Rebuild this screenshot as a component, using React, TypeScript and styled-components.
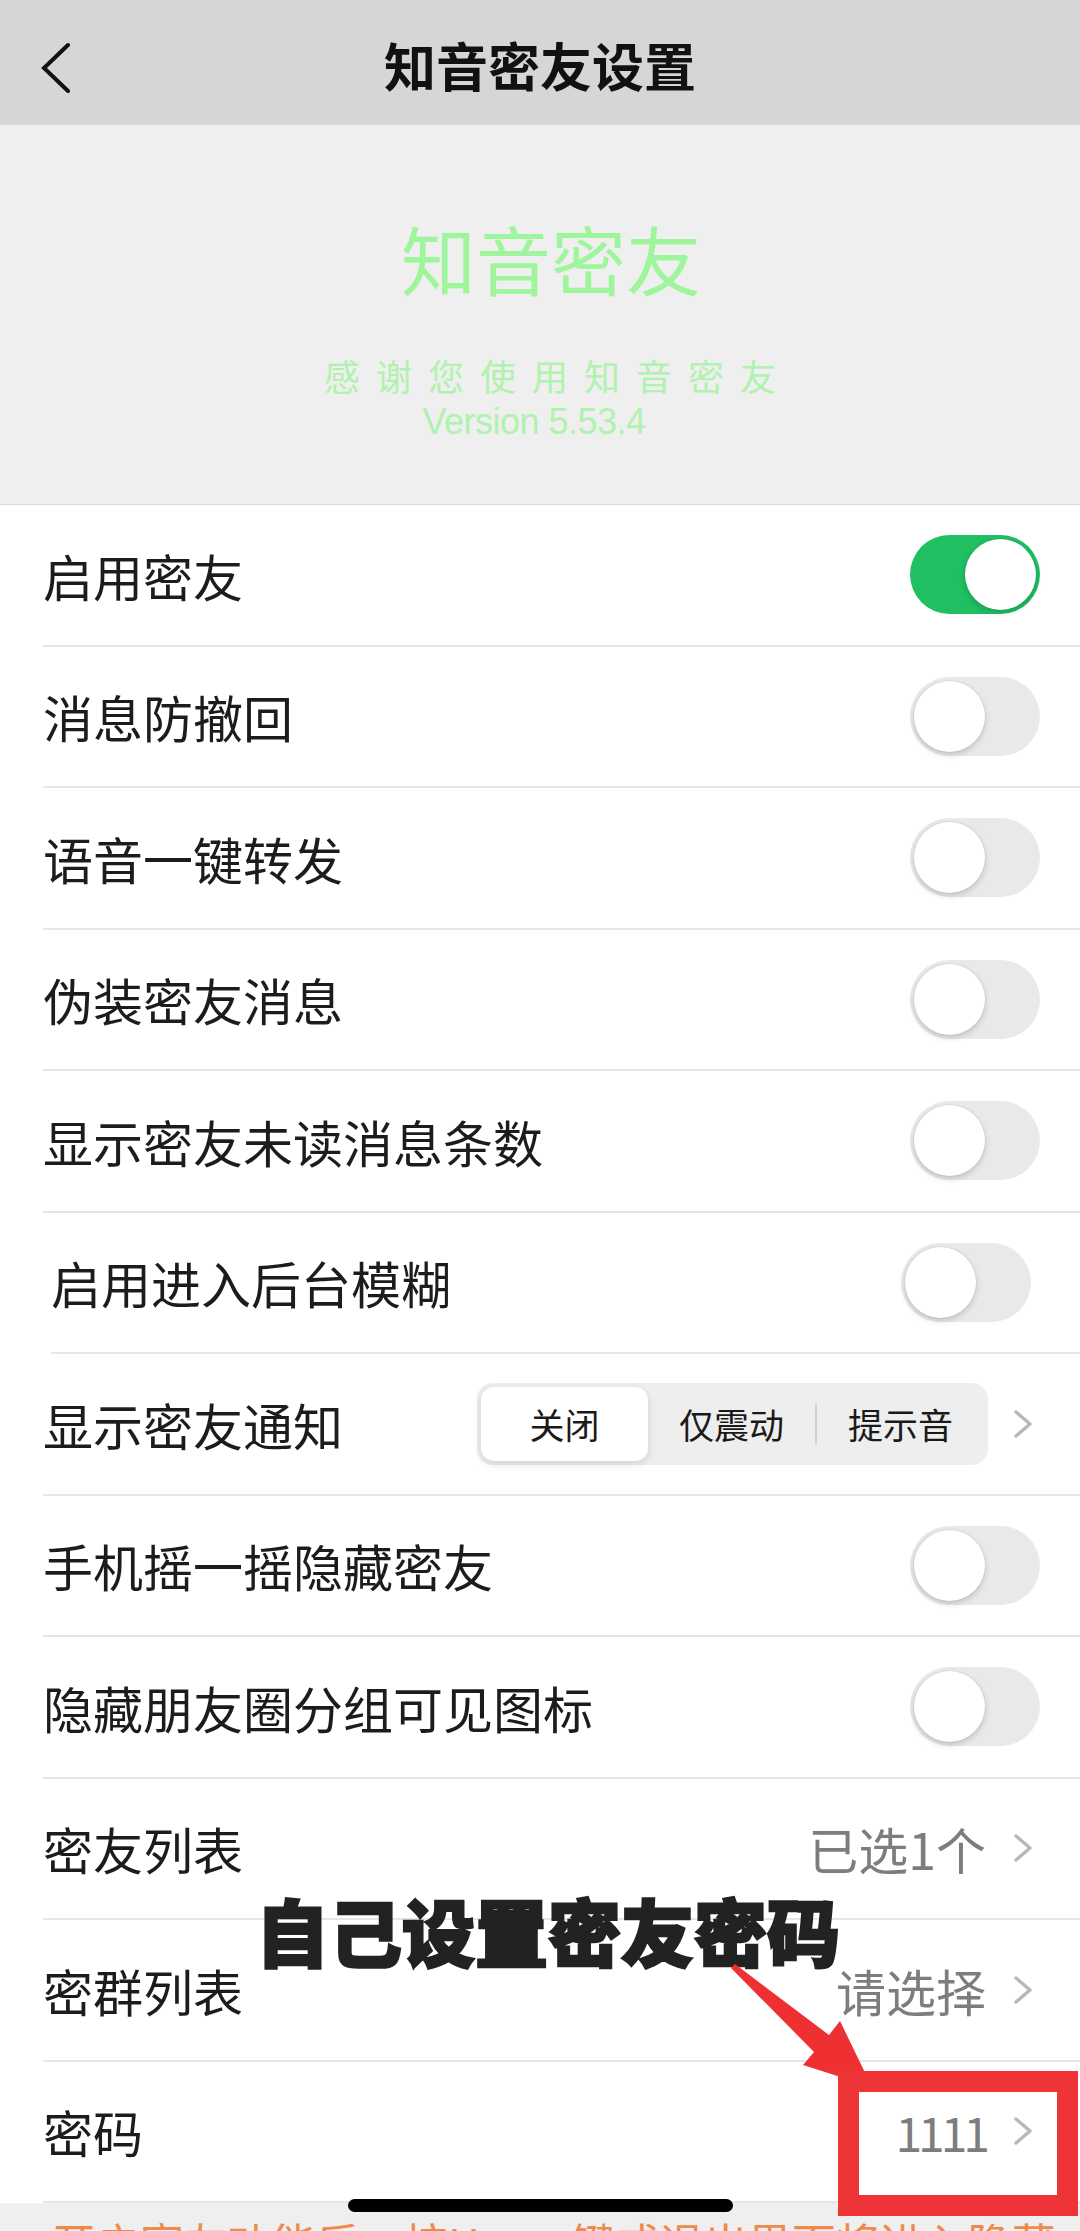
import styled, { createGlobalStyle } from 'styled-components';

const GlobalStyle = createGlobalStyle`
  html, body {
    margin: 0;
    padding: 0;
    background: #fff;
  }
  body {
    font-family: 'Noto Sans CJK SC', 'Noto Sans', sans-serif;
  }
`;

const Page = styled.div`
  position: relative;
  width: 1080px;
  height: 2231px;
  overflow: hidden;
  background: #fff;
`;

const NavBar = styled.header`
  height: 125px;
  background: #d6d6d6;
  display: grid;
  grid-template-columns: 1fr auto 1fr;
  align-items: center;
`;

const BackButton = styled.button`
  justify-self: start;
  margin-left: 40px;
  padding: 0;
  border: none;
  background: none;
  display: flex;
`;

const NavTitle = styled.h1`
  margin: 4px 0 0;
  font-size: 52px;
  line-height: 1;
  font-weight: 700;
  color: #111;
`;

const Banner = styled.section`
  box-sizing: border-box;
  height: 380px;
  padding-top: 95px;
  background: #efefef;
  border-bottom: 1px solid #d9d9d9;
  display: flex;
  flex-direction: column;
  align-items: center;
`;

const BrandName = styled.div`
  font-size: 75px;
  line-height: 75px;
  padding-left: 22px;
  color: #9ef59c;
`;

const Thanks = styled.div`
  margin-top: 62px;
  font-size: 36px;
  line-height: 36px;
  letter-spacing: 16px;
  padding-left: 36px;
  color: #b0f2ae;
`;

const Version = styled.div`
  margin-top: 9px;
  padding-right: 12px;
  font-family: 'Liberation Sans', Arial, sans-serif;
  font-size: 36px;
  line-height: 40px;
  letter-spacing: -0.5px;
  color: #b0f2ae;
`;

const Row = styled.div<{ $shift?: boolean }>`
  box-sizing: border-box;
  height: 141.5px;
  display: flex;
  padding-left: ${(p) => (p.$shift ? 51 : 43)}px;
`;

const RowBody = styled.div<{ $shift?: boolean }>`
  flex: 1;
  display: flex;
  align-items: center;
  border-bottom: 2px solid #e6e6e6;
  padding-right: ${(p) => (p.$shift ? 49 : 40)}px;
`;

const Label = styled.span`
  flex: 1;
  font-size: 50px;
  line-height: 1;
  color: #1c1c1c;
`;

const Value = styled.span<{ $narrow?: boolean }>`
  font-size: ${(p) => (p.$narrow ? 48 : 50)}px;
  line-height: 1;
  color: #7d7d7d;
  letter-spacing: ${(p) => (p.$narrow ? -4 : 0)}px;
  margin-right: 27px;
`;

const Switch = styled.span<{ $on?: boolean }>`
  box-sizing: border-box;
  width: 130px;
  height: 79px;
  border-radius: 40px;
  padding: 4px;
  display: flex;
  justify-content: ${(p) => (p.$on ? 'flex-end' : 'flex-start')};
  background: ${(p) => (p.$on ? '#1fbf62' : '#e9e9eb')};
`;

const Knob = styled.span`
  width: 71px;
  height: 71px;
  border-radius: 50%;
  background: #fff;
  box-shadow: 0 3px 6px rgba(0, 0, 0, 0.16), 0 0 0 1px rgba(0, 0, 0, 0.04);
`;

const Segmented = styled.div`
  box-sizing: border-box;
  display: flex;
  align-items: stretch;
  width: 511px;
  height: 82px;
  padding: 4px;
  border-radius: 16px;
  background: #eeeeef;
  margin-right: 25px;
`;

const Segment = styled.span<{ $active?: boolean }>`
  flex: 1;
  display: flex;
  align-items: center;
  justify-content: center;
  font-size: 35px;
  color: #1a1a1a;
  border-radius: 13px;
  background: ${(p) => (p.$active ? '#fff' : 'transparent')};
  box-shadow: ${(p) => (p.$active ? '0 3px 8px rgba(0, 0, 0, 0.12)' : 'none')};
`;

const SegDivider = styled.span`
  align-self: center;
  width: 2px;
  height: 40px;
  background: #d2d2d4;
`;

const ChevronWrap = styled.span`
  display: flex;
  margin-right: 7px;
`;

const Footer = styled.footer`
  background: #efefef;
  padding: 13px 0 0 52px;
  font-size: 44px;
  line-height: 1.2;
  color: #ef8a4c;
  white-space: nowrap;
`;

const HomeIndicator = styled.div`
  position: absolute;
  left: 348px;
  top: 2199px;
  width: 385px;
  height: 13px;
  border-radius: 7px;
  background: #000;
`;

const Annotation = styled.div`
  position: absolute;
  left: 256px;
  top: 1893px;
  font-size: 73px;
  line-height: 1;
  font-weight: 900;
  color: #222;
  -webkit-text-stroke: 2.5px #222;
  white-space: nowrap;
`;

const ArrowMark = styled.svg`
  position: absolute;
  left: 700px;
  top: 1950px;
`;

const RedBox = styled.div`
  position: absolute;
  box-sizing: border-box;
  left: 838px;
  top: 2071px;
  width: 240px;
  height: 145px;
  border: 21px solid #ef3437;
`;

function Chevron() {
  return (
    <ChevronWrap>
      <svg width="20" height="30" viewBox="0 0 20 30">
        <polyline points="3,3 17,15 3,27" fill="none" stroke="#b8b8b8" strokeWidth="3.5" strokeLinecap="round" strokeLinejoin="round" />
      </svg>
    </ChevronWrap>
  );
}

type Item =
  | { label: string; kind: 'switch'; on?: boolean; shift?: boolean }
  | { label: string; kind: 'notify' }
  | { label: string; kind: 'value'; value: string; narrow?: boolean };

const items: Item[] = [
  { label: '启用密友', kind: 'switch', on: true },
  { label: '消息防撤回', kind: 'switch' },
  { label: '语音一键转发', kind: 'switch' },
  { label: '伪装密友消息', kind: 'switch' },
  { label: '显示密友未读消息条数', kind: 'switch' },
  { label: '启用进入后台模糊', kind: 'switch', shift: true },
  { label: '显示密友通知', kind: 'notify' },
  { label: '手机摇一摇隐藏密友', kind: 'switch' },
  { label: '隐藏朋友圈分组可见图标', kind: 'switch' },
  { label: '密友列表', kind: 'value', value: '已选1个' },
  { label: '密群列表', kind: 'value', value: '请选择' },
  { label: '密码', kind: 'value', value: '1111', narrow: true },
];

export default function App() {
  return (
    <Page>
      <GlobalStyle />
      <NavBar>
        <BackButton>
          <svg width="32" height="60" viewBox="0 0 32 60">
            <polyline points="28,12 4,35 28,58" fill="none" stroke="#111" strokeWidth="4" strokeLinecap="round" strokeLinejoin="miter" />
          </svg>
        </BackButton>
        <NavTitle>知音密友设置</NavTitle>
        <span />
      </NavBar>

      <Banner>
        <BrandName>知音密友</BrandName>
        <Thanks>感谢您使用知音密友</Thanks>
        <Version>Version 5.53.4</Version>
      </Banner>

      {items.map((item) => {
        const shift = item.kind === 'switch' && item.shift;
        return (
          <Row key={item.label} $shift={shift}>
            <RowBody $shift={shift}>
              <Label>{item.label}</Label>
              {item.kind === 'switch' && (
                <Switch $on={item.on}>
                  <Knob />
                </Switch>
              )}
              {item.kind === 'notify' && (
                <>
                  <Segmented>
                    <Segment $active>关闭</Segment>
                    <Segment>仅震动</Segment>
                    <SegDivider />
                    <Segment>提示音</Segment>
                  </Segmented>
                  <Chevron />
                </>
              )}
              {item.kind === 'value' && (
                <>
                  <Value $narrow={item.narrow}>{item.value}</Value>
                  <Chevron />
                </>
              )}
            </RowBody>
          </Row>
        );
      })}

      <Footer>开启密友功能后，按Home键或退出界面将进入隐藏</Footer>

      <HomeIndicator />
      <Annotation>自己设置密友密码</Annotation>
      <ArrowMark width="200" height="160" viewBox="0 0 200 160">
        <polygon points="35,14 129,85 140,71 172,137 103,115 114,102 31,18" fill="#ef3032" />
      </ArrowMark>
      <RedBox />
    </Page>
  );
}
